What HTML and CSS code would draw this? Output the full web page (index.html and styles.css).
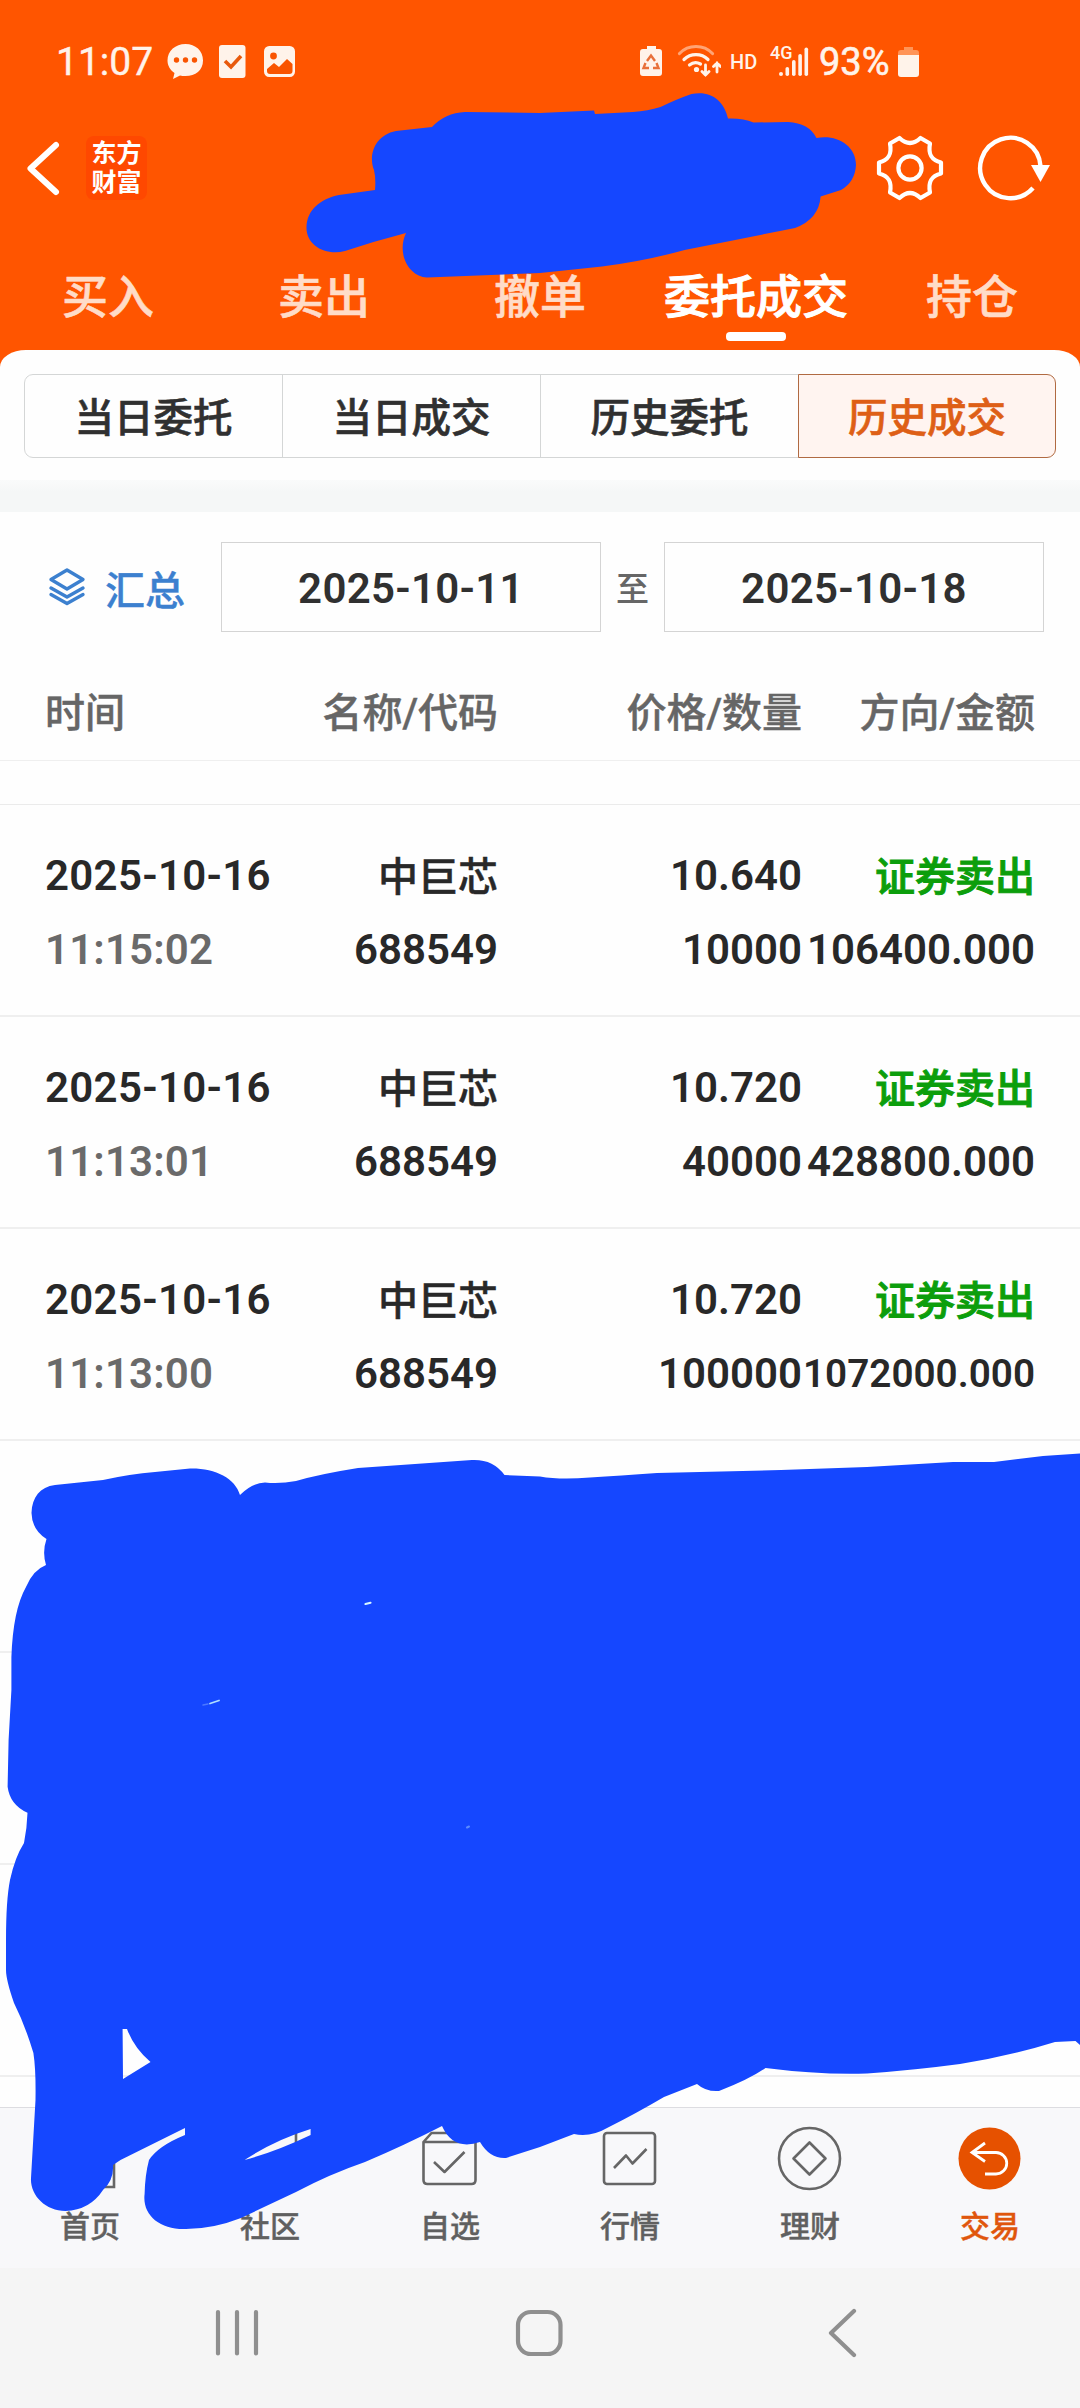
FILE: index.html
```html
<!DOCTYPE html>
<html lang="zh-CN">
<head>
<meta charset="utf-8">
<title>历史成交</title>
<link rel="stylesheet" href="styles.css">
</head>
<body>
<div class="screen">
  <header class="top">
    <div class="status">
      <span class="clock">11:07</span>
      <svg class="st-left" width="130" height="36" viewBox="167 44 130 36">
        <path fill="#fff3ea" d="M185.500 44c10 0 17.500 6.800 17.500 16.500S195.500 76 185.500 76c-2 0-4-.2-5.500-.6L173 79l1.500-6c-4.500-3-7-7.500-7-12.500C167.500 50.800 175.500 44 185.500 44z"/>
        <g fill="#f95400"><circle cx="176.500" cy="60" r="2.700"/><circle cx="185.500" cy="60" r="2.700"/><circle cx="194.500" cy="60" r="2.700"/></g>
        <rect x="219" y="45" width="26.500" height="33" rx="3" fill="#fff3ea"/>
        <path d="M225 61l6 6 10-11" fill="none" stroke="#e8590c" stroke-width="3.600"/>
        <rect x="265.200" y="47.200" width="28.600" height="28.600" rx="4" fill="#fff3ea" stroke="#fff3ea" stroke-width="2.400"/>
        <circle cx="273.500" cy="56" r="3.400" fill="#f95400"/>
        <path fill="#f95400" d="M267 69l7-6 5 4 8-8 5.500 5v7q0 3-3 3H270q-3 0-3-3z"/>
      </svg>
      <svg class="st-batt" width="82" height="36" viewBox="639 44 82 36">
        <path fill="#fff3ea" d="M647 46h9v3h3q3 0 3 3v21q0 3-3 3h-16q-3 0-3-3V52q0-3 3-3h4z"/>
        <path fill="none" stroke="#e8703a" stroke-width="2.400" d="M647 61l4-5.500 4 5.500M656.500 63l2 5h-5.500M649 68h-5.500l2-5"/>
        <g fill="none" stroke="#fff3ea" stroke-width="3.200" stroke-linecap="round">
          <path opacity=".5" d="M679.500 53.500a23 23 0 0 1 33 0"/>
          <path d="M684 59.500a17 17 0 0 1 24 0"/>
          <path d="M689.500 65a10 10 0 0 1 11-1"/>
          <path stroke-width="2.800" d="M705.500 65v10M702 71.500l3.500 3.500 3.500-3.500M717 72V63M713.500 66.500l3.500-3.500 3.500 3.500"/>
        </g>
        <circle cx="696.500" cy="69.500" r="2.600" fill="#fff3ea"/>
      </svg>
      <span class="hd">HD</span>
      <span class="net">4G</span>
      <svg class="st-sig" width="30" height="30" viewBox="779 48 30 30">
        <g fill="#fff3ea"><rect x="779" y="73" width="4" height="4" rx="2"/><rect x="785.500" y="68" width="3.600" height="9" rx="1.800"/><rect x="792" y="61" width="3.600" height="16" rx="1.800"/><rect x="798.300" y="55" width="3.600" height="22" rx="1.800"/><rect x="804.500" y="48.500" width="3.600" height="28.500" rx="1.800"/></g>
      </svg>
      <span class="pct">93%</span>
      <svg class="st-cell" width="22" height="32" viewBox="898 45 22 32">
        <path fill="#ff9457" d="M904 46h9v3h3q3 0 3 3v3h-21v-3q0-3 3-3h3z"/>
        <path fill="#fff3ea" d="M898 54h21v19q0 3-3 3h-15q-3 0-3-3z"/>
      </svg>
    </div>
    <div class="bar">
      <svg width="36" height="60" viewBox="26 138 36 60"><path d="M56 145L30.500 168.500 56 192" fill="none" stroke="#fff" stroke-width="6" stroke-linecap="round" stroke-linejoin="round"/></svg>
      <div class="logo"><span>东方</span><span>财富</span></div>
      <svg class="gear" width="70" height="70" viewBox="-35 -35 70 70">
        <g fill="none" stroke="#fff" stroke-width="4.200" stroke-linejoin="round">
          <path d="M-10.500-30Q0-20 10.500-30L20-24.500C18-14 21-8 31-5.500V5.500C21 8 18 14 20 24.500L10.500 30Q0 20-10.500 30L-20 24.500C-18 14-21 8-31 5.500V-5.500C-21-8-18-14-20-24.500Z"/>
          <circle r="11.600"/>
        </g>
      </svg>
      <svg class="reload" width="76" height="70" viewBox="976 133 76 70">
        <path d="M1033 188A30.200 30.200 0 1 1 1040.500 166" fill="none" stroke="#fff" stroke-width="4.400"/>
        <path d="M1031 165h19l-9.500 17z" fill="#fff"/>
      </svg>
    </div>
    <nav class="tabs">
      <span>买入</span><span>卖出</span><span>撤单</span><span class="on">委托成交</span><span>持仓</span>
    </nav>
  </header>

  <main class="sheet">
    <div class="seg"><span>当日委托</span><span>当日成交</span><span>历史委托</span><span class="on">历史成交</span></div>
    <div class="band"></div>
    <div class="filter">
      <svg width="40" height="40" viewBox="0 0 40 40"><g fill="none" stroke="#3c80cf" stroke-width="3.400" stroke-linejoin="round" stroke-linecap="round"><path d="M20 3L36 12.500 20 22 4 12.500z"/><path d="M4 21l16 9 16-9M4 27.500l16 9 16-9"/></g></svg>
      <span class="sum">汇总</span>
      <span class="date">2025-10-11</span>
      <span class="to">至</span>
      <span class="date">2025-10-18</span>
    </div>
    <div class="row head"><span>时间</span><span>名称/代码</span><span>价格/数量</span><span>方向/金额</span></div>
    <div class="gap"></div>
    <div class="row"><span class="day">2025-10-16</span><span class="cn">中巨芯</span><span>10.640</span><span class="sell">证券卖出</span><span class="time">11:15:02</span><span>688549</span><span>10000</span><span>106400.000</span></div>
    <div class="row"><span class="day">2025-10-16</span><span class="cn">中巨芯</span><span>10.720</span><span class="sell">证券卖出</span><span class="time">11:13:01</span><span>688549</span><span>40000</span><span>428800.000</span></div>
    <div class="row"><span class="day">2025-10-16</span><span class="cn">中巨芯</span><span>10.720</span><span class="sell">证券卖出</span><span class="time">11:13:00</span><span>688549</span><span>100000</span><span class="long">1072000.000</span></div>
    <div class="row"></div><div class="row"></div><div class="row"></div>
  </main>

  <nav class="dock">
    <span><svg width="70" height="66" viewBox="55 2125 70 66"><path d="M61 2160l29-27 29 27M67 2155v32h47v-32" fill="none" stroke="#666" stroke-width="2.600"/></svg>首页</span>
    <span><svg width="70" height="66" viewBox="235 2125 70 66"><path d="M244 2133h52v40h-30l-12 12v-12h-10z" fill="none" stroke="#666" stroke-width="2.600"/></svg>社区</span>
    <span><svg width="70" height="66" viewBox="415 2125 70 66"><g fill="none" stroke="#666" stroke-width="2.600" stroke-linejoin="round"><path d="M423.500 2142h52v38q0 4-4 4h-44q-4 0-4-4zM423.500 2142l8-9h36l8 9"/><path d="M434 2162l10.500 10 20-20"/></g></svg>自选</span>
    <span><svg width="70" height="66" viewBox="595 2125 70 66"><g fill="none" stroke="#666" stroke-width="2.600" stroke-linejoin="round"><rect x="604" y="2133" width="51" height="51" rx="3"/><path d="M614 2168l12-12.500 6.500 8 14-14.500"/></g></svg>行情</span>
    <span><svg width="70" height="66" viewBox="775 2125 70 66"><g fill="none" stroke="#666" stroke-width="2.600" stroke-linejoin="round"><circle cx="809.500" cy="2158.500" r="30.500"/><path d="M809.500 2142.500l16 16-16 16-16-16z"/></g></svg>理财</span>
    <span class="on"><svg width="70" height="66" viewBox="955 2125 70 66"><circle cx="989.500" cy="2158.500" r="31" fill="#e65100"/><path d="M985 2143l-13 9.500 13 9M972 2152.500h24a10.500 10.500 0 0 1 0 21.500h-11" fill="none" stroke="#fff" stroke-width="2.800"/></svg>交易</span>
  </nav>
  <div class="sys">
    <svg width="1080" height="60" viewBox="0 2303 1080 60"><g fill="none" stroke="#8f8f8f" stroke-width="4.200" stroke-linecap="round" stroke-linejoin="round"><path d="M218 2312v41.500M237 2312v41.500M256 2312v41.500M854 2311l-23 22 23 22"/><rect x="518" y="2312" width="42.500" height="42" rx="13"/></g></svg>
  </div>

  <svg class="ink" width="1080" height="2408" viewBox="0 0 1080 2408">
    <g fill="#1547ff" fill-rule="evenodd">
      <path d="M406 233Q375 241 345 251C325 256 306 245 306.500 227C307 210 320 199 339 195L375 190Q376 178 374 170C368 155 375 135 396 131L432 127Q445 113 465 112L540 113 594 110.500 595 114 633 112Q648 111 660.500 107Q677 99 691.500 94C710 90 724 100 728 118.500Q743 118 753.500 122.500L788 122Q809 123 816.500 138C836 134 856 145 856 165Q855 182 841 190L820.600 196.500Q819 219 795 228Q740 239 684.600 250Q645 261 602 266.500L540 273 427 277.500C410 277 396 255 406 233Z"/>
      <path d="M46.500 1539Q32 1530 31.500 1513C32 1497 40 1487 55 1485L103 1480Q130 1474 155 1472L190 1468.500C215 1468 235 1478 240 1495Q252 1483 265 1482.500Q280 1484 296 1481Q320 1474 358 1468L472 1460Q493 1459 504.500 1475L540 1476.500Q560 1480 590 1477.500Q620 1475.500 657 1473L781 1470 867 1467 953 1462 994 1462 1043 1456 1080 1453.500V2045L1075.500 2041 1055 2042Q1010 2056 960 2064Q915 2070 867 2073.500Q820 2075 765.500 2068Q750 2079 719 2091Q706 2092 697 2084L664 2097Q635 2114 609 2127Q590 2138 574 2134L540 2147 506 2158Q490 2159 480 2142Q453 2151 442 2126Q405 2145 365 2162Q330 2174 296 2192L241 2218Q213 2229 186 2229C160 2230 142 2215 144.600 2194Q145 2175 149 2160Q158 2146 185 2135V2128L120.500 2160 113 2165Q114 2180 103 2190Q90 2210 65.500 2211C45 2211 30 2195 31 2178L35.500 2100Q36 2070 33.400 2053Q25 2025 14 2003Q6 1980 6 1970V1940Q6 1900 10 1880Q15 1857 24 1843Q27 1828 27.500 1812.700Q10 1805 7.600 1786.700L8.600 1740 11.400 1690V1657Q13 1610 26 1587Q33 1570 46 1565Q42 1552 46.500 1539ZM122.600 2029H127Q134 2048 150.500 2062L123 2079ZM244.500 2160Q275 2140 310.600 2129V2135Q275 2152 244.500 2160Z"/>
    </g>
    <g fill="none" stroke-linecap="round">
      <path d="M365.500 1604l5-1.200" stroke="#d8f6ff" stroke-width="2.200"/>
      <path d="M210 1703.500l9-3" stroke="#b0deff" stroke-width="1.800"/>
      <path d="M203 1705l5-1" stroke="#4c78ff" stroke-width="1.400"/>
      <path d="M467 1827.500l2-1" stroke="#5c8cff" stroke-width="2"/>
    </g>
  </svg>
</div>
</body>
</html>
```

FILE: styles.css
```css
* { box-sizing: border-box; }
body {
  margin: 0;
  font-family: Roboto, "Noto Sans CJK SC", sans-serif;
  color: #282828;
  background: #fff;
}
svg { display: block; flex: none; }
.screen {
  position: relative;
  width: 1080px;
  height: 2408px;
  overflow: hidden;
  display: flex;
  flex-direction: column;
}
.top { height: 370px; background: #ff5500; flex: none; }

.status {
  display: flex;
  align-items: center;
  height: 84px;
  padding: 40px 0 0 56px;
  color: #fff3ea;
  white-space: nowrap;
}
.clock { width: 111px; font-size: 39px; line-height: 44px; -webkit-text-stroke: .4px; }
.st-batt { margin-left: 342px; }
.hd { width: 40px; padding-left: 9px; font-size: 20px; font-weight: 500; }
.net { width: 28px; margin-left: 9px; font-size: 18px; font-weight: 500; transform: translateY(-10px); }
.st-sig { margin-left: -19px; }
.pct { width: 88px; padding-left: 10px; font-size: 38px; line-height: 44px; -webkit-text-stroke: .6px; }
.st-cell { margin-left: 1px; }

.bar { display: flex; align-items: center; height: 168px; padding-left: 26px; }
.logo {
  width: 61px;
  height: 64px;
  margin-left: 24px;
  border-radius: 8px;
  background: #ff4800;
  color: #fff;
  display: flex;
  flex-direction: column;
  align-items: center;
  justify-content: center;
  font-size: 25px;
  line-height: 29px;
  font-weight: 700;
}
.gear { margin-left: 728px; }
.reload { margin-left: 31px; }

.tabs { display: grid; grid-template-columns: repeat(5, 1fr); height: 98px; }
.tabs span {
  position: relative;
  text-align: center;
  font-size: 46px;
  line-height: 91px;
  font-weight: 500;
  color: #ffdcc8;
  -webkit-text-stroke: .6px;
}
.tabs .on { color: #fff; -webkit-text-stroke: 1px; }
.tabs .on::after {
  content: "";
  position: absolute;
  left: 78px;
  top: 80px;
  width: 60px;
  height: 9px;
  border-radius: 4px;
  background: #fff;
}

.sheet { flex: 1; min-height: 0; margin-top: -20px; background: #fefefe; border-radius: 26px 26px 0 0 / 17px 17px 0 0; padding-top: 24px; overflow: hidden; }
.seg { display: grid; grid-template-columns: repeat(4, 1fr); height: 84px; margin: 0 24px; }
.seg span {
  height: 84px;
  border: 1px solid #d4d6d6;
  margin-right: -1px;
  font-size: 39.5px;
  line-height: 88px;
  font-weight: 500;
  text-align: center;
  color: #303030;
  -webkit-text-stroke: .6px;
}
.seg span:first-child { border-radius: 9px 0 0 9px; }
.seg .on { margin: 0; border-color: #b06a42; border-radius: 0 9px 9px 0; background: #fff4f0; color: #de5f16; }
.band { height: 32px; margin-top: 22px; background: linear-gradient(#fafbfb, #f5f7f7 12px); }

.filter { display: flex; align-items: center; height: 90px; margin-top: 30px; padding-left: 47px; }
.sum { width: 116px; padding: 2px 0 0 18px; font-size: 40px; font-weight: 500; color: #3c80cf; -webkit-text-stroke: .4px; }
.date {
  width: 380px;
  height: 90px;
  border: 1px solid #d4d4d4;
  text-align: center;
  font-size: 42px;
  letter-spacing: .3px;
  line-height: 92px;
  font-weight: 600;
  color: #303030;
}
.sum + .date { margin-left: 18px; }
.to { width: 63px; text-align: center; font-size: 33px; font-weight: 500; color: #666; }

.row {
  display: grid;
  grid-template-columns: 240px 213px 304px 233px;
  grid-auto-rows: 74px;
  align-content: start;
  height: 212px;
  padding: 34px 0 0 45px;
  border-bottom: 2px solid #efefef;
  font-size: 42px;
  line-height: 74px;
  font-weight: 600;
  white-space: nowrap;
}
.row span { text-align: right; height: 74px; }
.row span:nth-child(4n + 1) { text-align: left; }
.row .day { letter-spacing: .3px; }
.row .cn { font-size: 40px; line-height: 78px; font-weight: 500; -webkit-text-stroke: .5px; }
.row .sell { font-size: 40px; line-height: 78px; font-weight: 500; color: #0c9e0c; -webkit-text-stroke: 1px; }
.row .time { color: #6a6a6a; letter-spacing: .15px; }
.row .long { font-size: 38.7px; }
.head { height: 129px; padding-top: 45px; font-size: 40px; font-weight: 500; color: #666; border-bottom-width: 1px; -webkit-text-stroke: .4px; }
.gap { height: 44px; border-bottom: 1px solid #ebebeb; }

.dock {
  display: grid;
  grid-template-columns: repeat(6, 1fr);
  flex: none;
  height: 161px;
  padding-top: 17px;
  border-top: 1px solid #dcdce0;
  background: #f8f8fa;
}
.dock span {
  display: flex;
  flex-direction: column;
  align-items: center;
  font-size: 30px;
  line-height: 44px;
  font-weight: 500;
  color: #606060;
  -webkit-text-stroke: .4px;
}
.dock svg { margin-bottom: 14px; }
.dock .on { color: #e0560c; }
.sys { flex: none; height: 140px; padding-top: 35px; background: #f5f5f5; }
.ink { position: absolute; left: 0; top: 0; }
```
